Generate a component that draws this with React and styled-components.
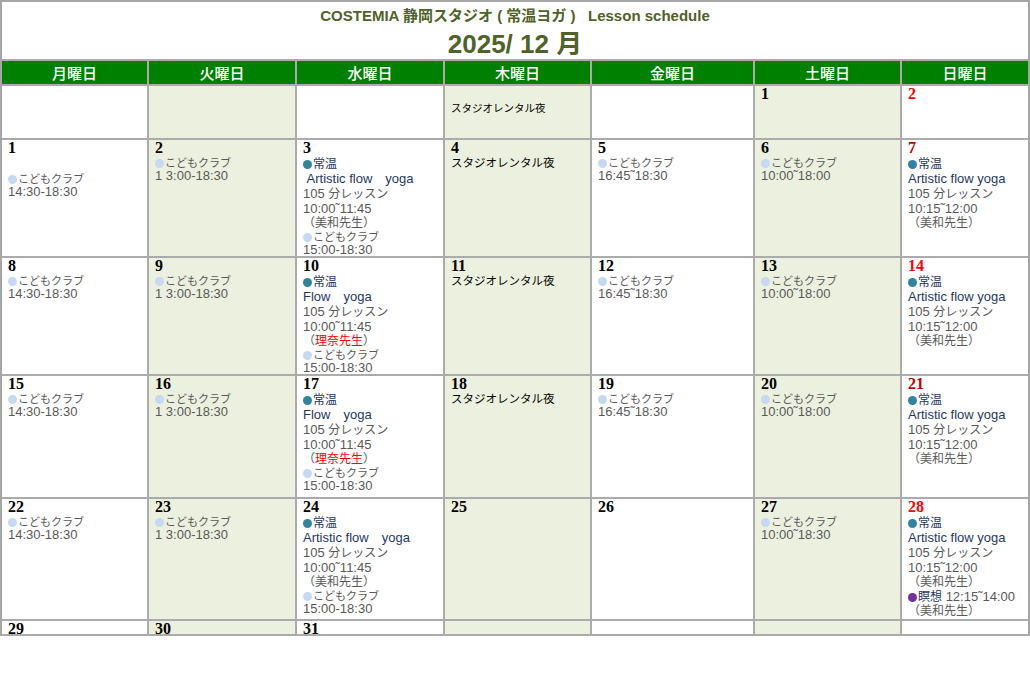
import React from 'react';
import styled, { createGlobalStyle } from 'styled-components';

const GlobalStyle = createGlobalStyle`
  body {
    margin: 0;
    background: #ffffff;
    font-family: "Liberation Sans", "Noto Sans CJK JP", sans-serif;
  }
`;

const Sheet = styled.div`
  width: 1030px;
  box-sizing: border-box;
  border: 2px solid #a6a6a6;
  border-bottom: none;
`;

const TitleArea = styled.div`
  height: 57px;
  display: flex;
  flex-direction: column;
  align-items: center;
  color: #4f6228;
  font-weight: bold;
`;

const Title = styled.div`
  font-size: 15px;
  line-height: 18px;
  margin-top: 5px;
`;

const Month = styled.div`
  font-size: 26px;
  line-height: 30px;
  margin-top: 4px;
`;

const Grid = styled.div`
  display: grid;
  grid-template-columns: 145px 146px 146px 145px 161px 145px 126px;
  grid-template-rows: 23px 52px 116px 116px 121px 120px 13px;
  gap: 2px;
  padding: 2px 0;
  background: #ababab;
`;

const HeadCell = styled.div`
  background: #008000;
  color: #ffffff;
  font-family: "Noto Sans CJK JP", sans-serif;
  font-weight: 500;
  font-size: 15px;
  display: flex;
  align-items: center;
  justify-content: center;
`;

const Cell = styled.div`
  background: ${(p) => (p.$shade ? '#ebf1de' : '#ffffff')};
  padding: 1px 4px 0 6px;
  overflow: hidden;
`;

const DayNum = styled.div`
  font-family: "Liberation Serif", serif;
  font-weight: bold;
  font-size: 16px;
  line-height: 14px;
  height: 15px;
  color: ${(p) => p.$color || '#000000'};
`;

// $h: line box height in px (15 for lesson lines, 13 for club lines)
const Line = styled.div`
  font-size: 13px;
  height: ${(p) => p.$h || 15}px;
  line-height: ${(p) => p.$h || 15}px;
  color: ${(p) =>
    p.$tone === 'navy' ? '#1f3864' : p.$tone === 'black' ? '#000000' : '#595959'};
  white-space: nowrap;
`;

const Jp = styled.span`
  font-family: "Noto Sans CJK JP", sans-serif;
  font-size: ${(p) => p.$size || '11px'};
  line-height: 1;
  color: ${(p) => p.$color || 'inherit'};
`;

const Dot = styled.span`
  display: inline-block;
  width: 9px;
  height: 9px;
  border-radius: 50%;
  background: ${(p) => p.$color};
  margin-right: 1px;
  vertical-align: -1px;
`;

const Spacer = styled.div`
  height: ${(p) => p.$h}px;
`;

const Rental = styled.div`
  font-family: "Noto Sans CJK JP", sans-serif;
  font-size: ${(p) => p.$size || '11.5px'};
  line-height: 15px;
  margin-top: ${(p) => p.$shift || 0}px;
  color: #000000;
`;

const Kids = ({ time }) => (
  <>
    <Line $h={13}>
      <Dot $color="#c6d9f1" />
      <Jp>こどもクラブ</Jp>
    </Line>
    <Line $h={13}>{time}</Line>
  </>
);

const Yoga = ({ title, time, teacher, red }) => (
  <>
    <Line $tone="navy">
      <Dot $color="#31849b" />
      <Jp $size="12px">常温</Jp>
    </Line>
    <Line $tone="navy">{title}</Line>
    <Line>
      105 <Jp $size="12px">分レッスン</Jp>
    </Line>
    <Line>{time}</Line>
    <Line $h={14}>
      <Jp $size="12px">
        （<Jp $size="12px" $color={red ? '#ff0000' : 'inherit'}>{teacher}</Jp>）
      </Jp>
    </Line>
  </>
);

const days = ['月曜日', '火曜日', '水曜日', '木曜日', '金曜日', '土曜日', '日曜日'];
const shaded = [false, true, false, true, false, true, false];

const sunday = (title, time) => <Yoga title={title} time={time} teacher="美和先生" />;

const weeks = [
  [
    { n: '' },
    { n: '' },
    { n: '' },
    { n: '', body: <Rental $size="10.5px" $shift={-2}>スタジオレンタル夜</Rental> },
    { n: '' },
    { n: '1' },
    { n: '2', color: '#ff0000' },
  ],
  [
    { n: '1', body: <><Spacer $h={16} /><Kids time="14:30-18:30" /></> },
    { n: '2', body: <Kids time="1 3:00-18:30" /> },
    {
      n: '3',
      body: (
        <>
          <Yoga title={'\u00a0Artistic flow\u3000yoga'} time="10:00˜11:45" teacher="美和先生" />
          <Kids time="15:00-18:30" />
        </>
      ),
    },
    { n: '4', body: <Rental $shift={-1}>スタジオレンタル夜</Rental> },
    { n: '5', body: <Kids time="16:45˜18:30" /> },
    { n: '6', body: <Kids time="10:00˜18:00" /> },
    { n: '7', color: '#c00000', body: sunday('Artistic flow yoga', '10:15˜12:00') },
  ],
  [
    { n: '8', body: <Kids time="14:30-18:30" /> },
    { n: '9', body: <Kids time="1 3:00-18:30" /> },
    {
      n: '10',
      body: (
        <>
          <Yoga title={'Flow\u3000yoga'} time="10:00˜11:45" teacher="理奈先生" red />
          <Kids time="15:00-18:30" />
        </>
      ),
    },
    { n: '11', body: <Rental $shift={-1}>スタジオレンタル夜</Rental> },
    { n: '12', body: <Kids time="16:45˜18:30" /> },
    { n: '13', body: <Kids time="10:00˜18:00" /> },
    { n: '14', color: '#ff0000', body: sunday('Artistic flow yoga', '10:15˜12:00') },
  ],
  [
    { n: '15', body: <Kids time="14:30-18:30" /> },
    { n: '16', body: <Kids time="1 3:00-18:30" /> },
    {
      n: '17',
      body: (
        <>
          <Yoga title={'Flow\u3000yoga'} time="10:00˜11:45" teacher="理奈先生" red />
          <Kids time="15:00-18:30" />
        </>
      ),
    },
    { n: '18', body: <Rental $shift={-1}>スタジオレンタル夜</Rental> },
    { n: '19', body: <Kids time="16:45˜18:30" /> },
    { n: '20', body: <Kids time="10:00˜18:00" /> },
    { n: '21', color: '#c00000', body: sunday('Artistic flow yoga', '10:15˜12:00') },
  ],
  [
    { n: '22', body: <Kids time="14:30-18:30" /> },
    { n: '23', body: <Kids time="1 3:00-18:30" /> },
    {
      n: '24',
      body: (
        <>
          <Yoga title={'Artistic flow\u3000yoga'} time="10:00˜11:45" teacher="美和先生" />
          <Kids time="15:00-18:30" />
        </>
      ),
    },
    { n: '25' },
    { n: '26' },
    { n: '27', body: <Kids time="10:00˜18:30" /> },
    {
      n: '28',
      color: '#ff0000',
      body: (
        <>
          {sunday('Artistic flow yoga', '10:15˜12:00')}
          <Line $tone="navy">
            <Dot $color="#7030a0" />
            <Jp $size="12px">瞑想</Jp>
            <span style={{ color: '#595959' }}> 12:15˜14:00</span>
          </Line>
          <Line $h={14}>
            <Jp $size="12px">（美和先生）</Jp>
          </Line>
        </>
      ),
    },
  ],
  [{ n: '29' }, { n: '30' }, { n: '31' }, { n: '' }, { n: '' }, { n: '' }, { n: '' }],
];

const App = () => (
  <>
    <GlobalStyle />
    <Sheet>
      <TitleArea>
        <Title>
          COSTEMIA 静岡スタジオ ( 常温ヨガ )&nbsp;&nbsp; Lesson schedule
        </Title>
        <Month>2025/ 12 月</Month>
      </TitleArea>
      <Grid>
        {days.map((d) => (
          <HeadCell key={d}>{d}</HeadCell>
        ))}
        {weeks.map((week, w) =>
          week.map((day, i) => (
            <Cell key={`${w}-${i}`} $shade={shaded[i]}>
              <DayNum $color={day.color}>{day.n}</DayNum>
              {day.body}
            </Cell>
          ))
        )}
      </Grid>
    </Sheet>
  </>
);

export default App;
